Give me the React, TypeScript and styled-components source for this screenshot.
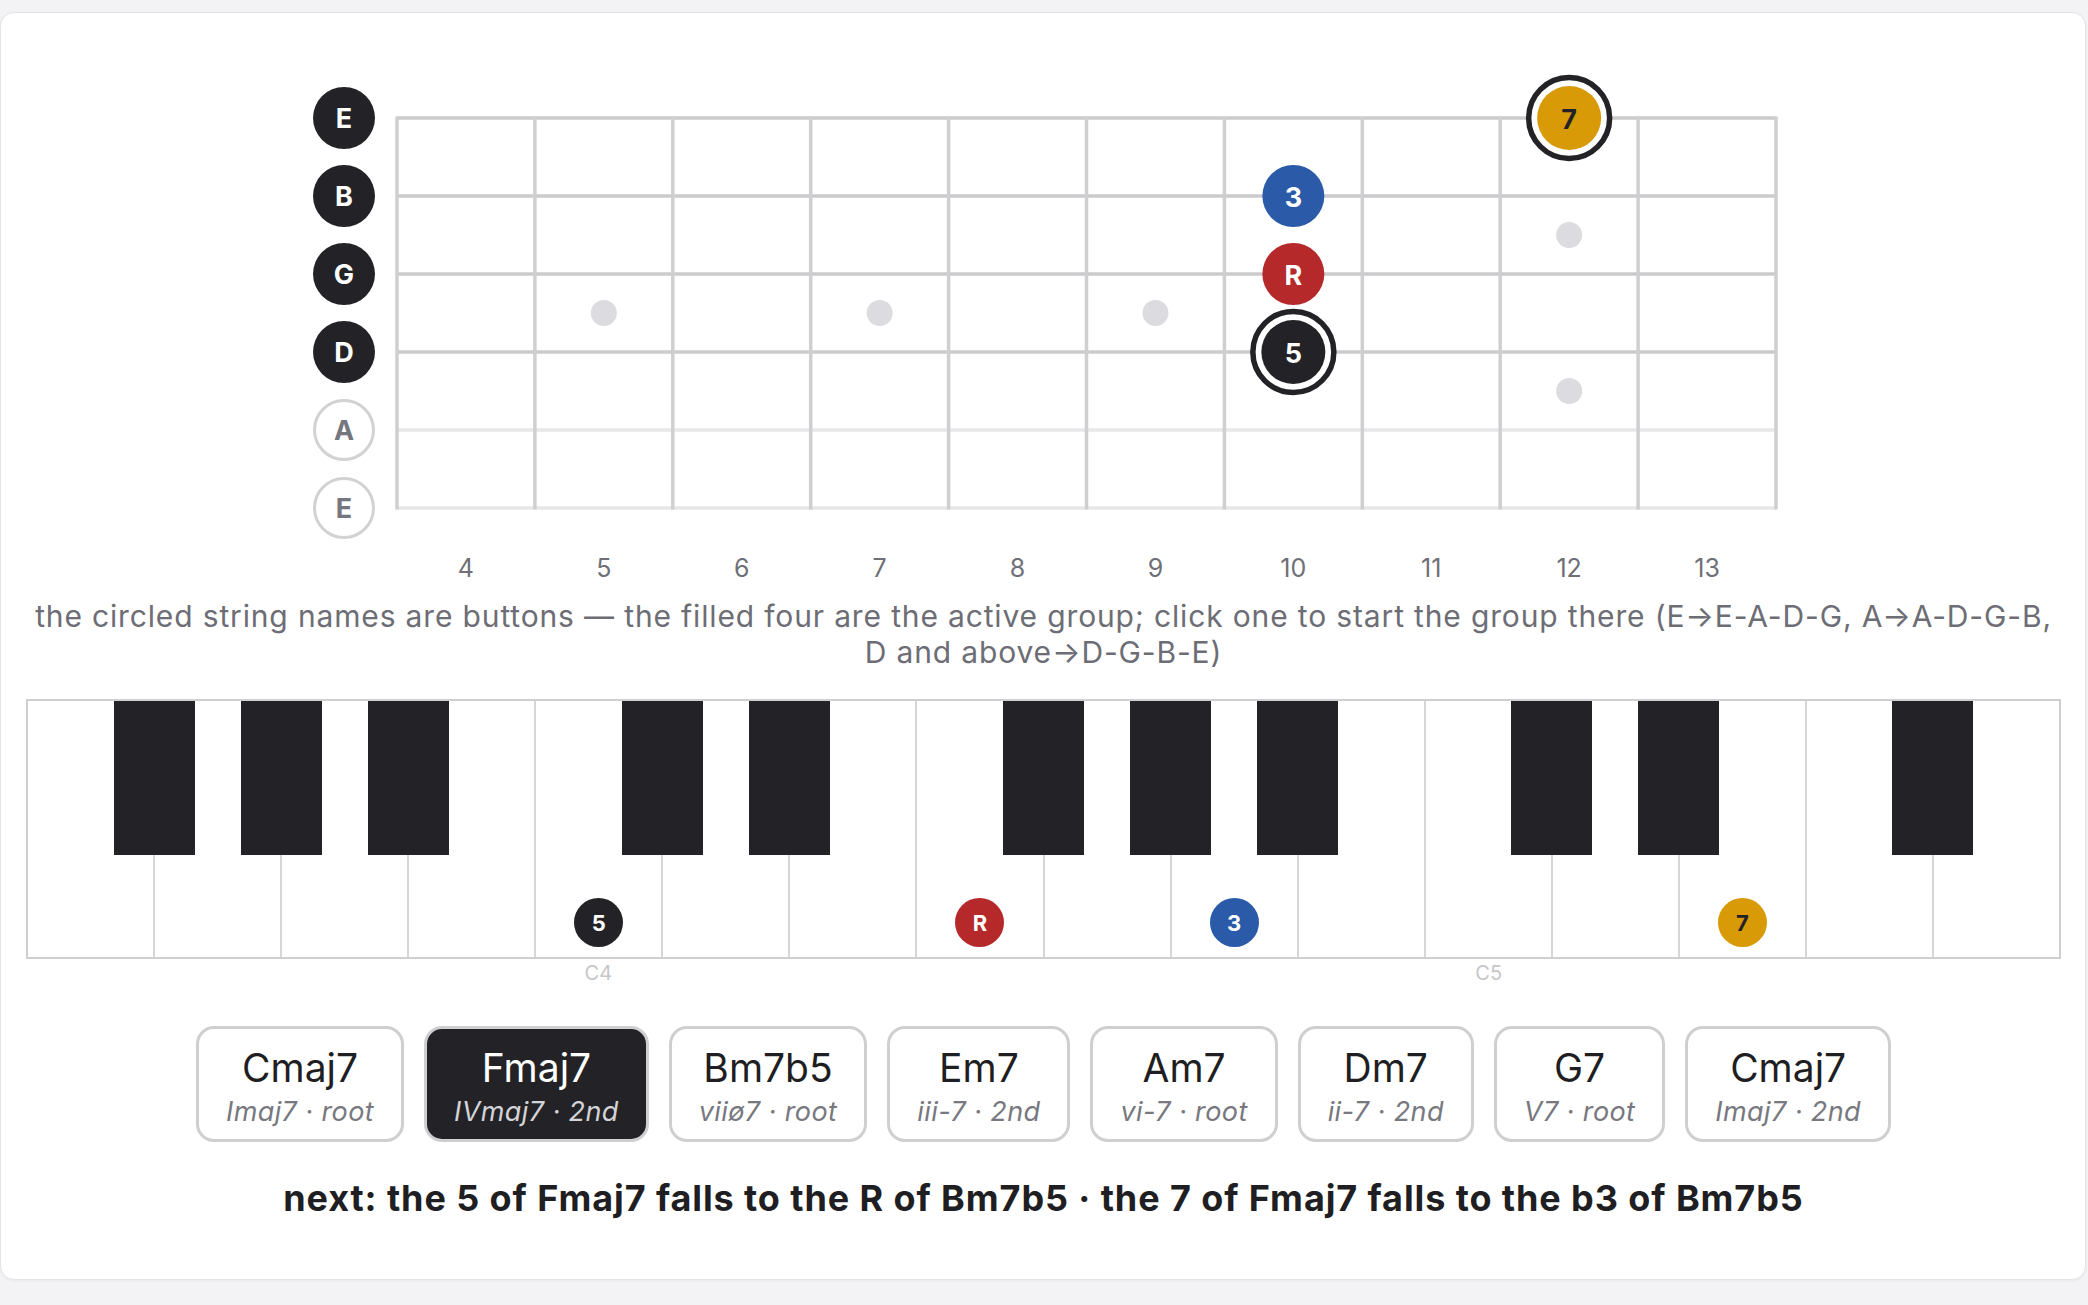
import React from "react";
import styled, { createGlobalStyle } from "styled-components";

const GlobalStyle = createGlobalStyle`
  html, body { margin: 0; padding: 0; background: #f3f3f5; }
  body { font-family: Inter, "Noto Sans", "Liberation Sans", sans-serif; color: #1f1f23; }
  * { box-sizing: border-box; }
`;

const Card = styled.div`
  margin: 12px 2px 25px 0;
  background: #ffffff;
  border: 1px solid #e4e4e7;
  border-radius: 14px;
  box-shadow: 0 1px 3px rgba(0, 0, 0, 0.05);
  padding: 53px 24px 61px 25px;
  display: flex;
  flex-direction: column;
`;

const FretRow = styled.div`
  display: flex;
  justify-content: center;
  align-items: flex-start;
  padding-left: 6px;
  height: 520px;
`;

const StringCol = styled.div`
  display: flex;
  flex-direction: column;
  gap: 16px;
  padding-top: 21px;
`;

const StringButton = styled.button<{ $active: boolean }>`
  width: 62px;
  height: 62px;
  border-radius: 50%;
  padding: 0;
  display: flex;
  align-items: center;
  justify-content: center;
  font-family: Inter, "Liberation Sans", sans-serif;
  font-weight: 700;
  font-size: 27px;
  cursor: pointer;
  background: ${(p) => (p.$active ? "#232327" : "#ffffff")};
  color: ${(p) => (p.$active ? "#ffffff" : "#76767e")};
  border: ${(p) => (p.$active ? "none" : "3px solid #d2d2d4")};
`;

const Caption = styled.p`
  margin: 12px 0 0;
  font-size: 30px;
  letter-spacing: 0.85px;
  line-height: 36px;
  color: #6d6d75;
  text-align: center;
`;

const PianoFrame = styled.div`
  position: relative;
  margin-top: 29px;
  height: 260px;
  border: 2px solid #cfcfd1;
  display: flex;
`;

const WhiteKey = styled.div<{ $last: boolean }>`
  flex: 1;
  display: flex;
  align-items: flex-end;
  justify-content: center;
  padding-bottom: 10px;
  border-right: ${(p) => (p.$last ? "none" : "2px solid #d6d6d8")};
`;

const BlackKey = styled.div`
  position: absolute;
  top: 0;
  height: 154px;
  width: 81px;
  margin-left: -40.5px;
  background: #232327;
  z-index: 2;
`;

const KeyMarker = styled.div<{ $bg: string; $fg: string }>`
  width: 49px;
  height: 49px;
  border-radius: 50%;
  background: ${(p) => p.$bg};
  color: ${(p) => p.$fg};
  display: flex;
  align-items: center;
  justify-content: center;
  font-weight: 700;
  font-size: 22px;
`;

const KeyLabels = styled.div`
  display: grid;
  grid-template-columns: repeat(16, 1fr);
  margin-top: 2px;
  height: 24px;
`;

const KeyLabel = styled.span`
  text-align: center;
  font-size: 20px;
  line-height: 24px;
  color: #c6c6c9;
`;

const ChordRow = styled.div`
  display: flex;
  justify-content: center;
  gap: 20px;
  margin-top: 41px;
`;

const ChordButton = styled.button<{ $active: boolean }>`
  height: 116px;
  padding: 17px 27px 0;
  border-radius: 18px;
  border: 3px solid #cfcfd1;
  background: ${(p) => (p.$active ? "#232327" : "#ffffff")};
  display: flex;
  flex-direction: column;
  align-items: center;
  cursor: pointer;
  font-family: Inter, "Liberation Sans", sans-serif;
`;

const ChordName = styled.span<{ $active: boolean }>`
  font-size: 39px;
  line-height: 44px;
  color: ${(p) => (p.$active ? "#ffffff" : "#1f1f23")};
`;

const ChordSub = styled.span<{ $active: boolean }>`
  margin-top: 6px;
  font-size: 27px;
  letter-spacing: 0.4px;
  line-height: 32px;
  font-style: italic;
  color: ${(p) => (p.$active ? "#d4d4d8" : "#78787f")};
  white-space: nowrap;
`;

const NextLine = styled.p`
  margin: 36px 0 0;
  font-size: 36px;
  letter-spacing: 0.9px;
  line-height: 40px;
  font-weight: 700;
  text-align: center;
  color: #1f1f23;
`;

const NUT_X = 22;
const CELL = 137.9;
const STRING_Y0 = 52;
const STRING_GAP = 78;
const FRETS = [4, 5, 6, 7, 8, 9, 10, 11, 12, 13];
const STRINGS = [
  { name: "E", active: true },
  { name: "B", active: true },
  { name: "G", active: true },
  { name: "D", active: true },
  { name: "A", active: false },
  { name: "E", active: false },
];

const COLORS: Record<string, { bg: string; fg: string }> = {
  R: { bg: "#b5292a", fg: "#ffffff" },
  "3": { bg: "#2a5aa8", fg: "#ffffff" },
  "5": { bg: "#232327", fg: "#ffffff" },
  "7": { bg: "#d89a07", fg: "#232327" },
};

const FRET_NOTES = [
  { fret: 12, string: 0, label: "7", ring: true },
  { fret: 10, string: 1, label: "3", ring: false },
  { fret: 10, string: 2, label: "R", ring: false },
  { fret: 10, string: 3, label: "5", ring: true },
];

const cellX = (fret: number) => NUT_X + (fret - 4 + 0.5) * CELL;
const stringY = (s: number) => STRING_Y0 + s * STRING_GAP;

function Fretboard() {
  const right = NUT_X + CELL * 10;
  const bottom = stringY(5);
  const inlays: { x: number; y: number }[] = [
    { x: cellX(5), y: (stringY(2) + stringY(3)) / 2 },
    { x: cellX(7), y: (stringY(2) + stringY(3)) / 2 },
    { x: cellX(9), y: (stringY(2) + stringY(3)) / 2 },
    { x: cellX(12), y: (stringY(1) + stringY(2)) / 2 },
    { x: cellX(12), y: (stringY(3) + stringY(4)) / 2 },
  ];
  return (
    <svg width={1405} height={520} viewBox="0 0 1405 520">
      {STRINGS.map((s, i) => (
        <line
          key={"s" + i}
          x1={NUT_X}
          x2={right}
          y1={stringY(i)}
          y2={stringY(i)}
          stroke={s.active ? "#cbcbcd" : "#e7e7e9"}
          strokeWidth={3.5}
        />
      ))}
      {Array.from({ length: 11 }).map((_, i) => (
        <line
          key={"f" + i}
          x1={NUT_X + i * CELL}
          x2={NUT_X + i * CELL}
          y1={STRING_Y0 - 1.5}
          y2={bottom + 1.5}
          stroke="#cfcfd1"
          strokeWidth={3.5}
        />
      ))}
      {inlays.map((d, i) => (
        <circle key={"d" + i} cx={d.x} cy={d.y} r={13} fill="#dcdce0" />
      ))}
      {FRETS.map((f) => (
        <text
          key={"n" + f}
          x={cellX(f)}
          y={502}
          textAnchor="middle"
          dominantBaseline="central"
          fontSize={25}
          fontFamily="Inter, 'Liberation Sans', sans-serif"
          fill="#6f6f77"
        >
          {f}
        </text>
      ))}
      {FRET_NOTES.map((n, i) => {
        const cx = cellX(n.fret);
        const cy = stringY(n.string);
        const c = COLORS[n.label];
        return (
          <g key={"note" + i}>
            {n.ring && <circle cx={cx} cy={cy} r={40.5} fill="#ffffff" stroke="#232327" strokeWidth={5.5} />}
            <circle cx={cx} cy={cy} r={n.ring ? 32 : 31} fill={c.bg} />
            <text
              x={cx}
              y={cy + 1}
              textAnchor="middle"
              dominantBaseline="central"
              fontSize={27}
              fontWeight={700}
              fontFamily="Inter, 'Liberation Sans', sans-serif"
              fill={c.fg}
            >
              {n.label}
            </text>
          </g>
        );
      })}
    </svg>
  );
}

const WHITE_KEYS = ["F3", "G3", "A3", "B3", "C4", "D4", "E4", "F4", "G4", "A4", "B4", "C5", "D5", "E5", "F5", "G5"];
const BLACK_AFTER = [0, 1, 2, 4, 5, 7, 8, 9, 11, 12, 14];
const PIANO_NOTES: Record<number, string> = { 4: "5", 7: "R", 9: "3", 13: "7" };

function Piano() {
  return (
    <>
      <PianoFrame>
        {WHITE_KEYS.map((k, i) => {
          const m = PIANO_NOTES[i];
          return (
            <WhiteKey key={k} $last={i === WHITE_KEYS.length - 1}>
              {m && (
                <KeyMarker $bg={COLORS[m].bg} $fg={COLORS[m].fg}>
                  {m}
                </KeyMarker>
              )}
            </WhiteKey>
          );
        })}
        {BLACK_AFTER.map((b) => (
          <BlackKey key={"b" + b} style={{ left: `${((b + 1) / WHITE_KEYS.length) * 100}%` }} />
        ))}
      </PianoFrame>
      <KeyLabels>
        {WHITE_KEYS.map((k) => (
          <KeyLabel key={"l" + k}>{k.startsWith("C") ? k : ""}</KeyLabel>
        ))}
      </KeyLabels>
    </>
  );
}

const CHORDS = [
  { name: "Cmaj7", sub: "Imaj7 · root" },
  { name: "Fmaj7", sub: "IVmaj7 · 2nd", active: true },
  { name: "Bm7b5", sub: "viiø7 · root" },
  { name: "Em7", sub: "iii-7 · 2nd" },
  { name: "Am7", sub: "vi-7 · root" },
  { name: "Dm7", sub: "ii-7 · 2nd" },
  { name: "G7", sub: "V7 · root" },
  { name: "Cmaj7", sub: "Imaj7 · 2nd" },
];

export default function App() {
  return (
    <>
      <GlobalStyle />
      <Card>
        <FretRow>
          <StringCol>
            {STRINGS.map((s, i) => (
              <StringButton key={"sb" + i} $active={s.active}>
                {s.name}
              </StringButton>
            ))}
          </StringCol>
          <Fretboard />
        </FretRow>
        <Caption>
          the circled string names are buttons — the filled four are the active group; click one to start the group
          there (E→E-A-D-G, A→A-D-G-B, D and above→D-G-B-E)
        </Caption>
        <Piano />
        <ChordRow>
          {CHORDS.map((c, i) => (
            <ChordButton key={"c" + i} $active={!!c.active}>
              <ChordName $active={!!c.active}>{c.name}</ChordName>
              <ChordSub $active={!!c.active}>{c.sub}</ChordSub>
            </ChordButton>
          ))}
        </ChordRow>
        <NextLine>next: the 5 of Fmaj7 falls to the R of Bm7b5 · the 7 of Fmaj7 falls to the b3 of Bm7b5</NextLine>
      </Card>
    </>
  );
}
